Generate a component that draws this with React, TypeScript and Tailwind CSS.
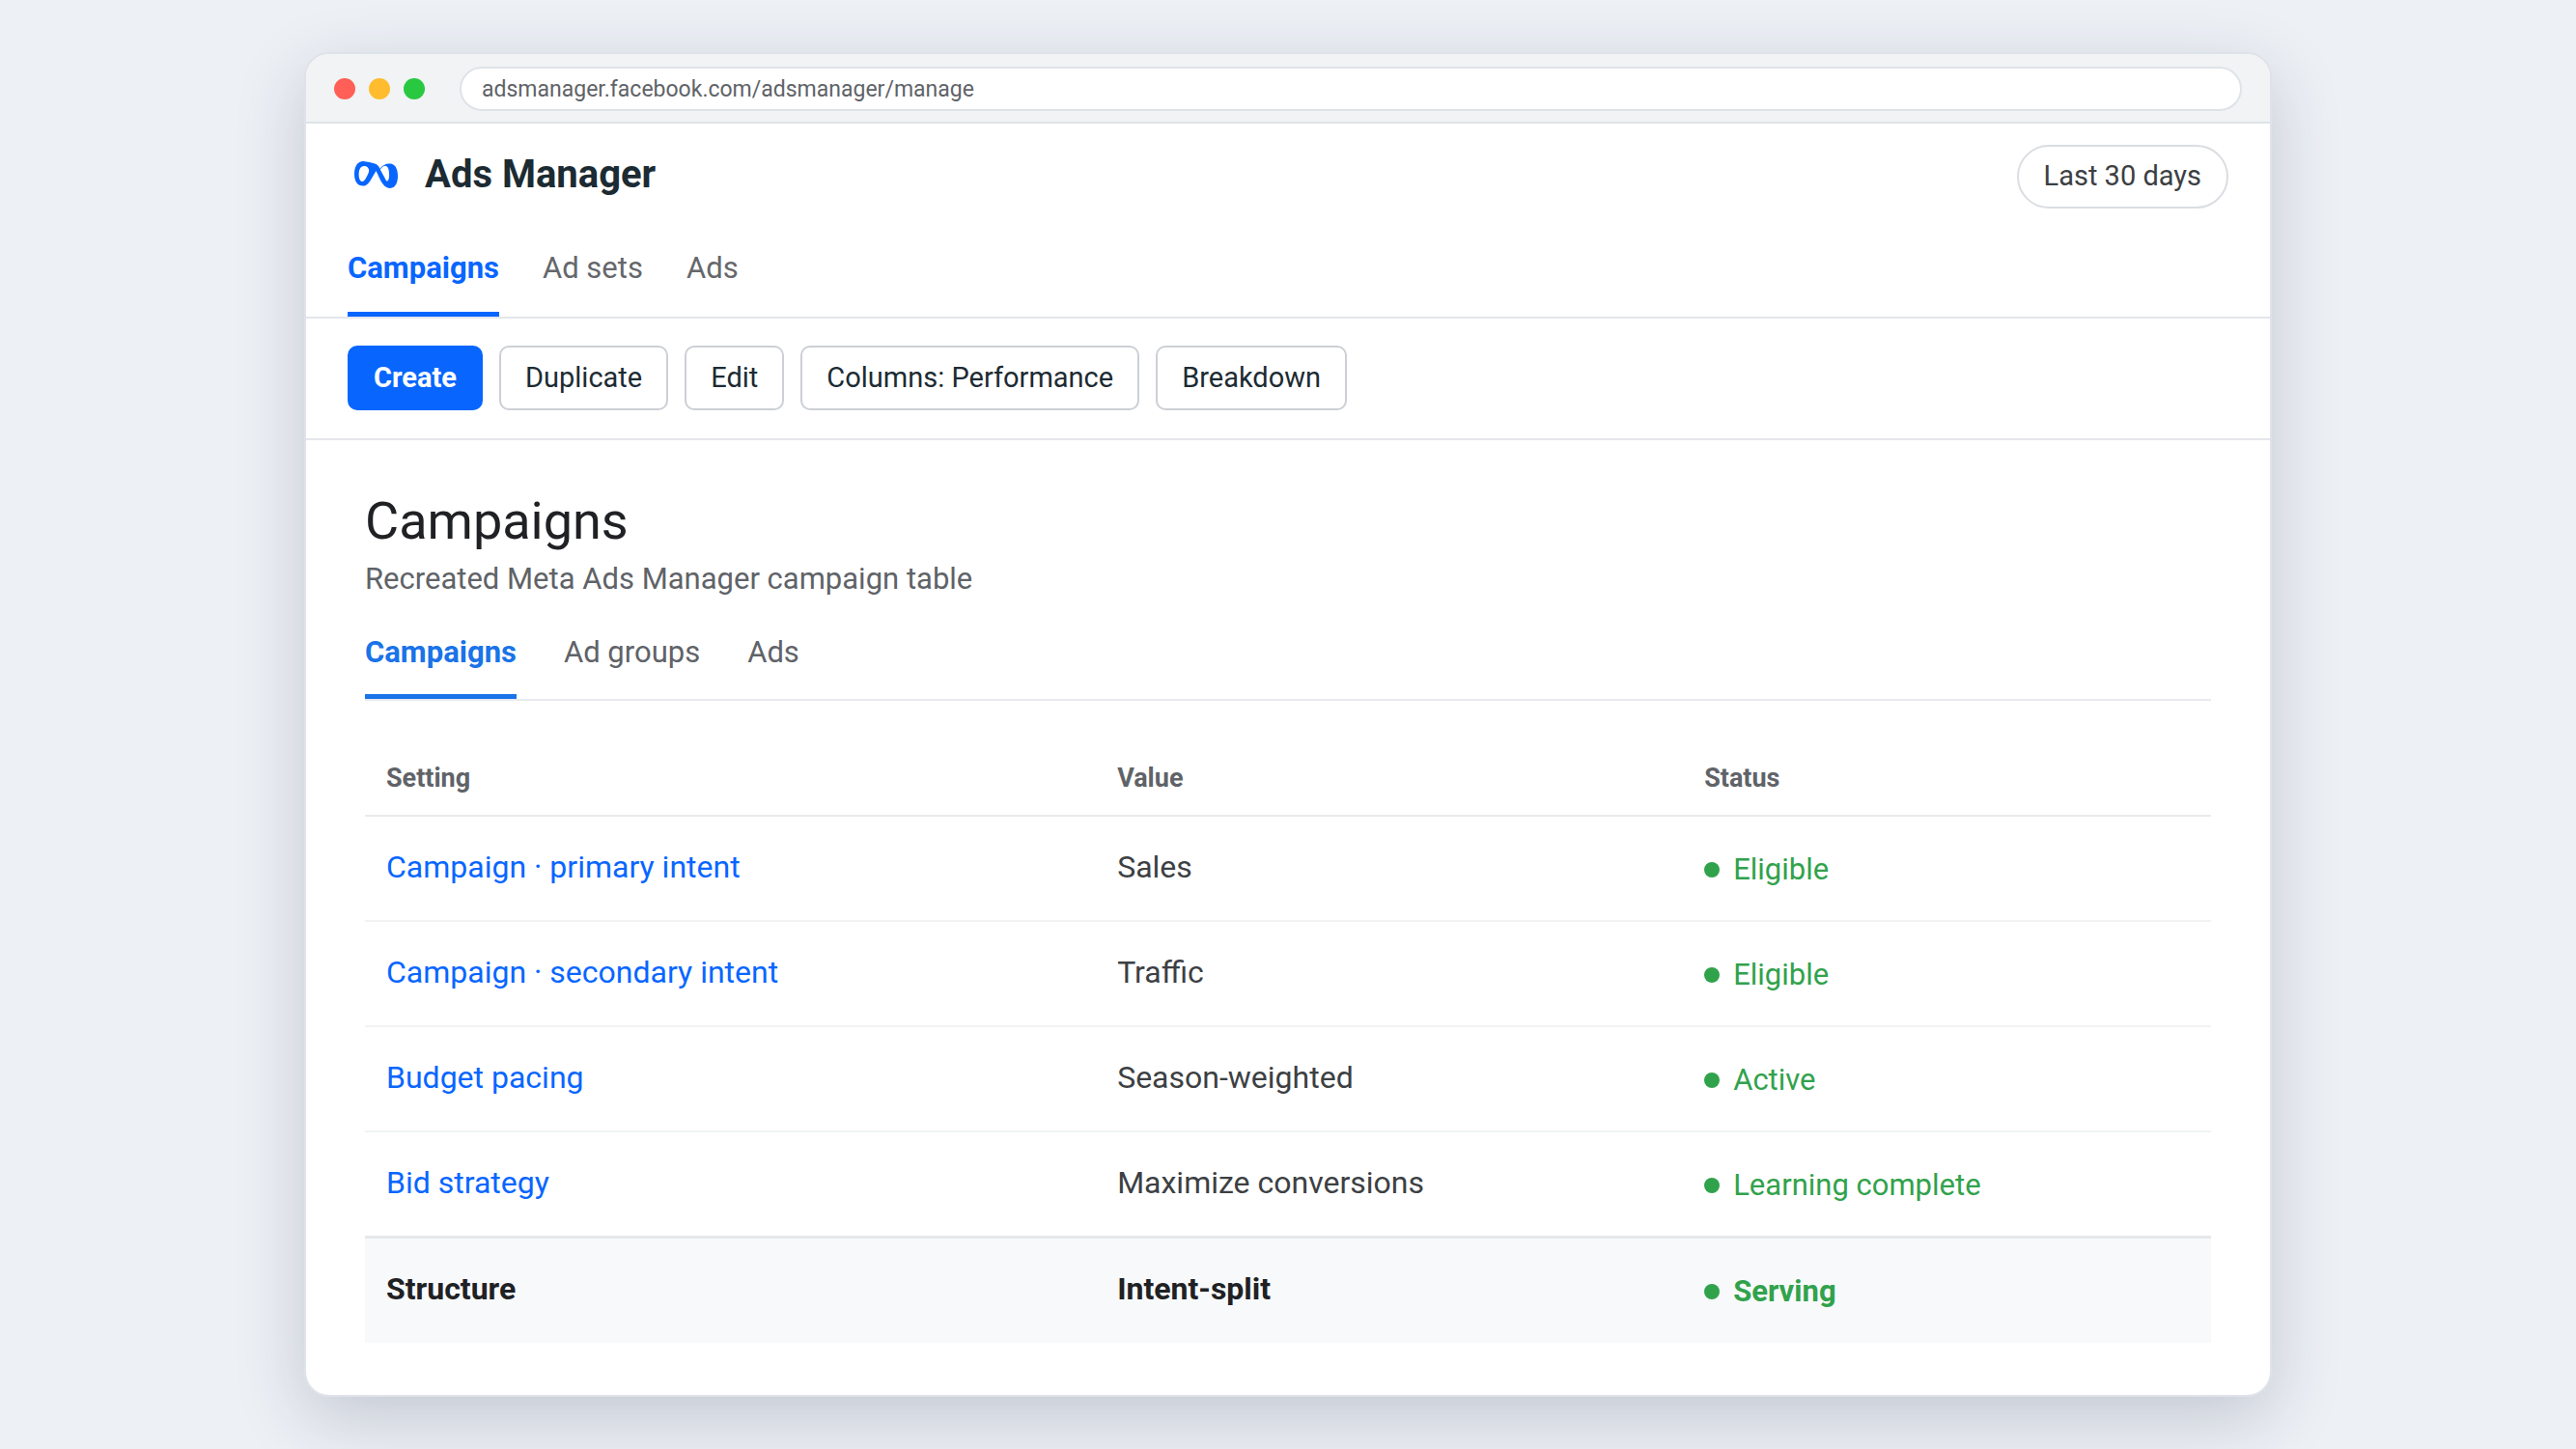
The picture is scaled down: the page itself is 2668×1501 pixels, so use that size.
import { useState } from "react";

interface SettingRow {
  setting: string;
  value: string;
  status: string;
}

const sections = ["Campaigns", "Ad sets", "Ads"];
const views = ["Campaigns", "Ad groups", "Ads"];
const actions = ["Duplicate", "Edit", "Columns: Performance", "Breakdown"];

const rows: SettingRow[] = [
  { setting: "Campaign · primary intent", value: "Sales", status: "Eligible" },
  { setting: "Campaign · secondary intent", value: "Traffic", status: "Eligible" },
  { setting: "Budget pacing", value: "Season-weighted", status: "Active" },
  { setting: "Bid strategy", value: "Maximize conversions", status: "Learning complete" },
];

const summary: SettingRow = { setting: "Structure", value: "Intent-split", status: "Serving" };

function MetaLogo() {
  return (
    <svg viewBox="0 0 136 84" className="mx-[7px] h-[28px] w-[45px]" fill="#0866ff" aria-hidden="true">
      <path
        fillRule="evenodd"
        d="M28 0C40 1 54 5 64 7C72 9 77 16 80 23C88 12 99 6 112 7C128 8 136 24 136 46C136 68 128 84 112 84C98 84 90 74 83 62L68 30L52 57C45 69 38 77 27 77C10 77 0 63 0 40C0 15 11 0 28 0ZM31 15C20 14 14 26 14 41C14 55 19 63 25 63C32 63 37 53 44 37C47 30 46 24 43 21C40 17 36 15 31 15ZM81 26C86 19 91 14 97 14C106 15 109 27 109 42C109 54 107 62 101 62C97 56 90 41 81 26Z"
      />
    </svg>
  );
}

function BrowserBar() {
  return (
    <div className="flex items-center border-b-2 border-[#dfe3e8] bg-[#f1f3f4] px-[29px] pb-[11px] pt-[13px]">
      <div className="flex gap-[14px]">
        <span className="size-[22px] rounded-full bg-[#ff5f57]" />
        <span className="size-[22px] rounded-full bg-[#febc2e]" />
        <span className="size-[22px] rounded-full bg-[#28c840]" />
      </div>
      <input
        type="text"
        readOnly
        aria-label="Address"
        value="adsmanager.facebook.com/adsmanager/manage"
        className="ml-9 h-[46px] min-w-0 flex-1 rounded-full border-2 border-[#dfe3e8] bg-white px-[21px] text-[23px] text-[#5f6368] outline-none"
      />
    </div>
  );
}

function Status({ label }: { label: string }) {
  return (
    <span className="flex items-center gap-[14px] text-[31px] leading-[36px] text-[#31a24c]">
      <span className="size-4 rounded-full bg-[#31a24c]" />
      {label}
    </span>
  );
}

export default function App() {
  const [section, setSection] = useState("Campaigns");
  const [view, setView] = useState("Campaigns");

  return (
    <div className="min-h-screen bg-[#edf1f6] px-[315px] py-[54px] font-['Roboto',sans-serif]">
      <div className="overflow-hidden rounded-[26px] border-2 border-[#dfe3e9] bg-white shadow-[0_22px_72px_rgba(30,36,60,0.2)]">
        <BrowserBar />

        <header className="flex items-start justify-between px-[43px] pt-[22px]">
          <div className="flex h-[62px] items-center gap-[21px]">
            <MetaLogo />
            <h1 className="text-[40px] font-bold leading-[48px] text-[#1c2b33]">Ads Manager</h1>
          </div>
          <button
            type="button"
            className="h-[66px] rounded-full border-2 border-[#dadde1] px-[26px] text-[29px] text-[#3c4043]"
          >
            Last 30 days
          </button>
        </header>

        <nav className="flex gap-[45px] border-b-2 border-[#e4e6eb] px-[43px] pt-[19px]">
          {sections.map((name) => (
            <button
              key={name}
              type="button"
              onClick={() => setSection(name)}
              className={`border-b-[5px] pb-[27px] pt-[25px] text-[31px] leading-[36px] ${
                section === name ? "border-[#0866ff] font-bold text-[#0866ff]" : "border-transparent text-[#65676b]"
              }`}
            >
              {name}
            </button>
          ))}
        </nav>

        <div className="flex gap-[17px] border-b-2 border-[#e4e6eb] px-[43px] pb-[29px] pt-[28px] text-[29px]">
          <button
            type="button"
            className="h-[67px] rounded-[10px] border-2 border-[#0866ff] bg-[#0866ff] px-[25px] font-bold text-white"
          >
            Create
          </button>
          {actions.map((name) => (
            <button
              key={name}
              type="button"
              className="h-[67px] rounded-[10px] border-2 border-[#ccd0d5] bg-white px-[25px] text-[#1c2b33]"
            >
              {name}
            </button>
          ))}
        </div>

        <main className="px-[61px] pb-[54px] pt-[52px]">
          <h2 className="text-[54px] leading-[64px] text-[#202124]">Campaigns</h2>
          <p className="mt-[10px] text-[31px] leading-[36px] text-[#5f6368]">
            Recreated Meta Ads Manager campaign table
          </p>

          <nav className="mt-[16px] flex gap-[49px] border-b-2 border-[#e8eaed]">
            {views.map((name) => (
              <button
                key={name}
                type="button"
                onClick={() => setView(name)}
                className={`border-b-[5px] pb-[25px] pt-[24px] text-[31px] leading-[36px] ${
                  view === name ? "border-[#1a73e8] font-bold text-[#1a73e8]" : "border-transparent text-[#5f6368]"
                }`}
              >
                {name}
              </button>
            ))}
          </nav>

          <table className="mt-[42px] w-full table-fixed border-separate border-spacing-0 text-left text-[32px] leading-[37px] text-[#3c4043]">
            <thead>
              <tr className="text-[27px] leading-[32px] text-[#5f6368]">
                <th className="w-[39.6%] border-b-2 border-[#e8eaed] px-[22px] py-[22px]">Setting</th>
                <th className="w-[31.8%] border-b-2 border-[#e8eaed] px-[22px] py-[22px]">Value</th>
                <th className="border-b-2 border-[#e8eaed] px-[22px] py-[22px]">Status</th>
              </tr>
            </thead>
            <tbody>
              {rows.map((row) => (
                <tr key={row.setting} className="group">
                  <td className="border-b-2 border-[#f1f3f4] px-[22px] pb-[36px] pt-[34px] group-last:border-b-0">
                    <a href="#" className="text-[#0866ff]">
                      {row.setting}
                    </a>
                  </td>
                  <td className="border-b-2 border-[#f1f3f4] px-[22px] pb-[36px] pt-[34px] group-last:border-b-0">
                    {row.value}
                  </td>
                  <td className="border-b-2 border-[#f1f3f4] px-[22px] pt-[2px] group-last:border-b-0">
                    <Status label={row.status} />
                  </td>
                </tr>
              ))}
            </tbody>
            <tfoot>
              <tr className="bg-[#f8f9fb] font-bold text-[#202124]">
                <td className="border-t-[3px] border-[#e6e8eb] px-[22px] pb-[37px] pt-[34px]">{summary.setting}</td>
                <td className="border-t-[3px] border-[#e6e8eb] px-[22px] pb-[37px] pt-[34px]">{summary.value}</td>
                <td className="border-t-[3px] border-[#e6e8eb] px-[22px] pt-[2px]">
                  <Status label={summary.status} />
                </td>
              </tr>
            </tfoot>
          </table>
        </main>
      </div>
    </div>
  );
}
